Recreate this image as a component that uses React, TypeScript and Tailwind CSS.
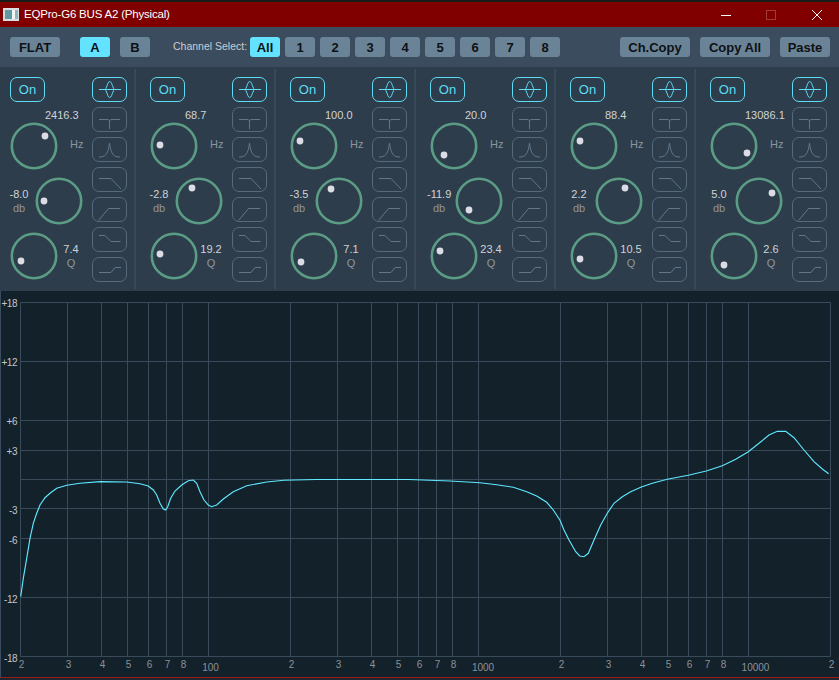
const channels = ["1", "2", "3", "4", "5", "6", "7", "8"];

// dot offsets are measured from the knob centre
const bands = [
  { freq: "2416.3", gain: "-8.0", q: "7.4", dots: [[11, -10], [-15, 0], [-13, 5]] },
  { freq: "68.7", gain: "-2.8", q: "19.2", dots: [[-14, -1], [-7, -13], [-14, -2]] },
  { freq: "100.0", gain: "-3.5", q: "7.1", dots: [[-14, -5], [-8, -12], [-13, 6]] },
  { freq: "20.0", gain: "-11.9", q: "23.4", dots: [[-10, 9], [-10, 9], [-14, -5]] },
  { freq: "88.4", gain: "2.2", q: "10.5", dots: [[-14, -5], [6, -13], [-14, 3]] },
  { freq: "13086.1", gain: "5.0", q: "2.6", dots: [[13, 7], [13, -8], [-10, 9]] },
];

const filterIcons = [
  <path key="t" d="M7 12.5H15C17 12.5 17.5 13 17.5 15V22M28 12.5H20C18 12.5 17.5 13 17.5 15" />,
  <path key="peak" d="M7 20C13 20 16 18 17.5 6C19 18 22 20 28 20" />,
  <path key="hc" d="M7 11.5H19L29 22" />,
  <path key="hp" d="M6.5 23.5L16.5 11.5H28" />,
  <path key="hs" d="M7 8.5H13L19 14.5H28.5" />,
  <path key="ls" d="M7 15.5H19L23 10.5H29" />,
];

const hLines = [302.5, 361.5, 420.5, 450.5, 479.5, 508.5, 538.5, 597.5, 656.5];
const vLines = [
  20.5, 67.5, 101.5, 127.5, 148.5, 166.5, 182.5, 208.5,
  290.5, 337.5, 371.5, 397.5, 418.5, 436.5, 452.5, 478.5,
  560.5, 607.5, 641.5, 667.5, 688.5, 706.5, 722.5, 748.5, 830.5,
];

const dbLabels: [string, number][] = [
  ["+18", 306.5], ["+12", 365.5], ["+6", 424.5], ["+3", 454.5],
  ["-3", 514], ["-6", 544], ["-12", 603], ["-18", 662],
];

const hzLabels: [string, number][] = [
  ["2", 21.5], ["3", 68.5], ["4", 102.5], ["5", 128.5], ["6", 149.5], ["7", 167.5], ["8", 183.5],
  ["2", 291.5], ["3", 338.5], ["4", 372.5], ["5", 398.5], ["6", 419.5], ["7", 437.5], ["8", 453.5],
  ["2", 561.5], ["3", 608.5], ["4", 642.5], ["5", 668.5], ["6", 689.5], ["7", 707.5], ["8", 723.5],
  ["2", 831.5],
];

const curve =
  "20.7,596.7 23.3,578.3 26.7,558.3 30,538.3 33.3,523.3 36.7,513.3 40,505 45,497.7 50,493.3 56.7,488.3 66.7,485.3 " +
  "80,483.3 100,481.7 126.7,482 140,483.7 148.3,486 153.3,490 156.7,495 160,503.3 163.3,509 165.7,510 167.7,506.7 " +
  "170.7,498.3 175,491 181.7,485 188.3,480.7 193.3,480 196.7,483.3 200,491.7 204,500 208.3,505 211.7,506.7 216.7,505 " +
  "223.3,499 233.3,491.7 246.7,485.7 266.7,482 284,480.3 316,479.5 408.7,479.5 450,481 480,482.7 496.7,484.7 " +
  "513.3,487.3 526.7,491.7 536.7,496 546.7,502.3 553.3,510 560,520.3 564,530 569,540 575.7,551.7 579.7,556 584,556.7 " +
  "588.3,553.3 594,540 600.7,525 607.3,513.3 614,503.3 622.3,496.7 630.7,491.7 641.3,487 652.3,483.3 667.3,479.3 " +
  "688.3,475.3 706.3,471 722.3,465.7 735.7,459.3 748.3,451.7 759,443.3 769,435 777.3,431.3 785.7,431.3 794,437.7 " +
  "804,450 814,461.7 822.3,469 828.7,473.7";

function ToolButton({ label, width, active }: { label: string; width: string; active?: boolean }) {
  return (
    <button
      className={`h-[20px] ${width} rounded-[3px] text-[13px] font-bold leading-none text-[#0d1114] ${
        active ? "bg-[#63e3ff]" : "bg-[#6b8397]"
      }`}
    >
      {label}
    </button>
  );
}

function Knob({ dot }: { dot: number[] }) {
  return (
    <svg width="48" height="48" viewBox="0 0 48 48" className="shrink-0">
      <circle cx="24" cy="24" r="22.2" fill="none" stroke="#5b9c84" strokeWidth="2.6" />
      <circle cx={24 + dot[0]} cy={24 + dot[1]} r="3.4" fill="#dcdde4" />
    </svg>
  );
}

function Band({ band, last }: { band: (typeof bands)[number]; last?: boolean }) {
  return (
    <div className={`my-[2px] flex w-[136px] pl-[10px] pt-[8px] ${last ? "" : "border-r-2 border-[#384a5a]"}`}>
      <div className="w-[82px] shrink-0">
        <button className="block h-[25px] w-[35px] rounded-[7px] border border-[#5fdcf5] text-[13px] leading-none text-[#5fdcf5]">
          On
        </button>

        <div className="flex h-[70px]">
          <div className="mt-[20px]">
            <Knob dot={band.dots[0]} />
          </div>
          <div className="-ml-[13px] whitespace-nowrap pt-[6px] text-[11px] leading-[14px]">
            <div className="text-[#d0d3d6]">{band.freq}</div>
            <div className="ml-[25px] mt-[15px] text-[#8d959c]">Hz</div>
          </div>
        </div>

        <div className="flex h-[55px]">
          <div className="-ml-[3px] w-[24px] whitespace-nowrap pt-[15px] text-center text-[11px] leading-[14px]">
            <div className="text-[#d0d3d6]">{band.gain}</div>
            <div className="text-[#8d959c]">db</div>
          </div>
          <div className="ml-[4px] mt-[5px]">
            <Knob dot={band.dots[1]} />
          </div>
        </div>

        <div className="flex">
          <div className="mt-[5px]">
            <Knob dot={band.dots[2]} />
          </div>
          <div className="w-[26px] pt-[15px] text-center text-[11px] leading-[14px]">
            <div className="text-[#d0d3d6]">{band.q}</div>
            <div className="text-[#8d959c]">Q</div>
          </div>
        </div>
      </div>

      <div className="flex flex-col gap-[5px]">
        <button className="h-[25px] w-[35px] rounded-[7px] border border-[#5fdcf5]">
          <svg width="33" height="23" viewBox="1 1 33 23" fill="none" stroke="#5fdcf5" className="block">
            <path d="M7 12.5H29" />
            <path d="M17.7 4.5C16 4.5 15.5 8 14.5 10C13.4 12 13.4 13 14.5 15C15.5 17 16 20.5 17.7 20.5C19.4 20.5 20 17 21 15C22 13 22 12 21 10C20 8 19.4 4.5 17.7 4.5Z" />
          </svg>
        </button>
        {filterIcons.map((icon, i) => (
          <button key={i} className="h-[25px] w-[35px] rounded-[7px] border border-[#566a7b]">
            <svg width="33" height="23" viewBox="1 1 33 23" fill="none" stroke="#62778a" className="block">
              {icon}
            </svg>
          </button>
        ))}
      </div>
    </div>
  );
}

export default function App() {
  return (
    <div className="flex h-[680px] w-[839px] flex-col overflow-hidden bg-[#1c262e] font-['Liberation_Sans',Arial,sans-serif]">
      <div className="h-[2px] shrink-0 bg-[#1a1a1a]" />

      <header className="flex h-[25px] shrink-0 items-center bg-[#800000] text-white">
        <svg width="16" height="13" viewBox="0 0 16 13" className="ml-[3px]">
          <rect width="16" height="13" fill="#d9dee0" />
          <rect x="2" y="2" width="7" height="9" fill="#5f9aa0" />
          <rect x="9" y="2" width="3" height="9" fill="#f2f4f4" />
          <rect x="12" y="2" width="3" height="9" fill="#8eb4c0" />
        </svg>
        <span className="ml-[5px] text-[11.5px] tracking-[-0.2px]">EQPro-G6 BUS A2 (Physical)</span>
        <div className="ml-auto flex items-center">
          <svg width="10" height="10" viewBox="0 0 10 10" className="mr-[35px]" stroke="white">
            <path d="M0 5.5H10" />
          </svg>
          <svg width="10" height="10" viewBox="0 0 10 10" className="mr-[36px]" fill="none" stroke="#a33a3a">
            <rect x="0.5" y="0.5" width="9" height="9" />
          </svg>
          <svg width="10" height="10" viewBox="0 0 10 10" className="mr-[17px]" stroke="white">
            <path d="M0 0L10 10M10 0L0 10" />
          </svg>
        </div>
      </header>

      <div className="flex h-[40px] shrink-0 items-center bg-[#3a4c5d] pl-[10px]">
        <ToolButton label="FLAT" width="w-[50px]" />
        <div className="ml-[20px] flex gap-[10px]">
          <ToolButton label="A" width="w-[30px]" active />
          <ToolButton label="B" width="w-[30px]" />
        </div>
        <span className="ml-[23px] w-[77px] whitespace-nowrap text-[10.5px] text-[#c9ced2]">Channel Select:</span>
        <div className="flex gap-[5px]">
          <ToolButton label="All" width="w-[30px]" active />
          {channels.map((c) => (
            <ToolButton key={c} label={c} width="w-[30px]" />
          ))}
        </div>
        <div className="ml-[60px] flex gap-[10px]">
          <ToolButton label="Ch.Copy" width="w-[70px]" />
          <ToolButton label="Copy All" width="w-[70px]" />
          <ToolButton label="Paste" width="w-[50px]" />
        </div>
      </div>

      <div className="flex h-[224px] shrink-0 gap-[4px] bg-[#2d3d4c]">
        {bands.map((band, i) => (
          <Band key={i} band={band} last={i === bands.length - 1} />
        ))}
      </div>

      <div className="h-[387px] shrink-0 border-b border-[#9a1a1a] border-l border-l-[#3a4c5d] bg-[#13212b]">
        <svg width="838" height="386" viewBox="1 291 838 386" className="block">
          <g stroke="#394b5b" fill="none">
            {hLines.map((y) => (
              <path key={y} d={`M20.5 ${y}H830.5`} />
            ))}
            {vLines.map((x) => (
              <path key={x} d={`M${x} 302.5V656.5`} />
            ))}
          </g>
          <g fill="#c3c6c8" fontSize="10" textAnchor="end" letterSpacing="-0.5">
            {dbLabels.map(([t, y]) => (
              <text key={t} x="17" y={y}>
                {t}
              </text>
            ))}
          </g>
          <g fill="#8b9298" fontSize="10" textAnchor="middle">
            {hzLabels.map(([t, x]) => (
              <text key={x} x={x} y="667.5">
                {t}
              </text>
            ))}
            <text x="210.5" y="671">100</text>
            <text x="483" y="671">1000</text>
            <text x="755.5" y="671">10000</text>
          </g>
          <polyline points={curve} fill="none" stroke="#5fe8ff" strokeWidth="1.15" />
        </svg>
      </div>
    </div>
  );
}
